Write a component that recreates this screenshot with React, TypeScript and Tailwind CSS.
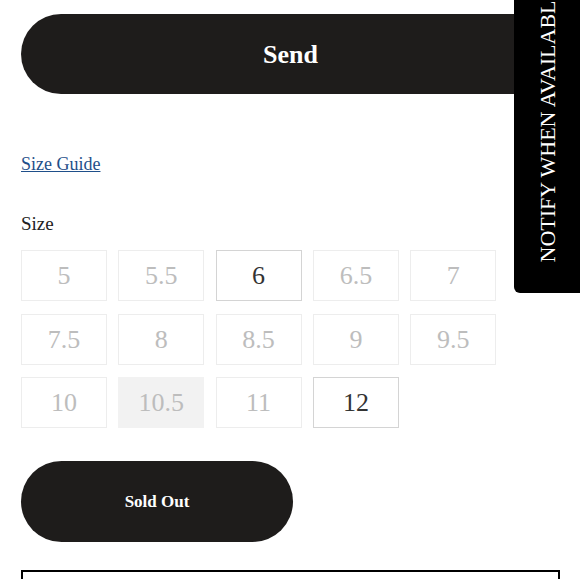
import React from "react";

const sizes: { v: string; avail?: boolean; muted?: boolean }[] = [
  { v: "5" },
  { v: "5.5" },
  { v: "6", avail: true },
  { v: "6.5" },
  { v: "7" },
  { v: "7.5" },
  { v: "8" },
  { v: "8.5" },
  { v: "9" },
  { v: "9.5" },
  { v: "10" },
  { v: "10.5", muted: true },
  { v: "11" },
  { v: "12", avail: true },
];

export default function App() {
  return (
    <div
      className="relative w-[580px] h-[579px] overflow-hidden bg-white"
      style={{ fontFamily: '"Liberation Serif", "DejaVu Serif", serif' }}
    >
      <div className="px-[21px] pt-[14px]">
        <button className="w-[539px] h-[80px] rounded-full bg-[#1e1c1b] text-white text-[26px] font-bold flex items-center justify-center">
          Send
        </button>

        <div className="mt-[59px]">
          <a className="text-[18px] text-[#1f4f8a] underline leading-[22px]">Size Guide</a>
        </div>

        <div className="mt-[36px] text-[19px] text-[#222] leading-[22px]">Size</div>

        <div className="mt-[15px] grid grid-cols-[repeat(5,86px)] gap-x-[11.3px] gap-y-[12.5px]">
          {sizes.map((s) => (
            <div
              key={s.v}
              className={
                "h-[51px] flex items-center justify-center text-[26px] border " +
                (s.avail
                  ? "border-[#d4d4d4] text-[#333]"
                  : s.muted
                  ? "border-[#f2f2f2] bg-[#f2f2f2] text-[#bdbdbd]"
                  : "border-[#ededed] text-[#bdbdbd]")
              }
            >
              {s.v}
            </div>
          ))}
        </div>

        <button className="mt-[33px] w-[272px] h-[81px] rounded-full bg-[#1e1c1b] text-white text-[17px] font-bold flex items-center justify-center">
          Sold Out
        </button>

        <div className="mt-[28px] w-[539px] h-[40px] border-2 border-black" />
      </div>

      <div className="absolute right-0 top-0 w-[66px] h-[293px] bg-black rounded-bl-[6px] overflow-hidden">
        <span className="absolute bottom-[31px] left-[21px] text-white text-[22px] leading-[26px] whitespace-nowrap [writing-mode:vertical-rl] rotate-180">
          NOTIFY WHEN AVAILABLE
        </span>
      </div>
    </div>
  );
}
